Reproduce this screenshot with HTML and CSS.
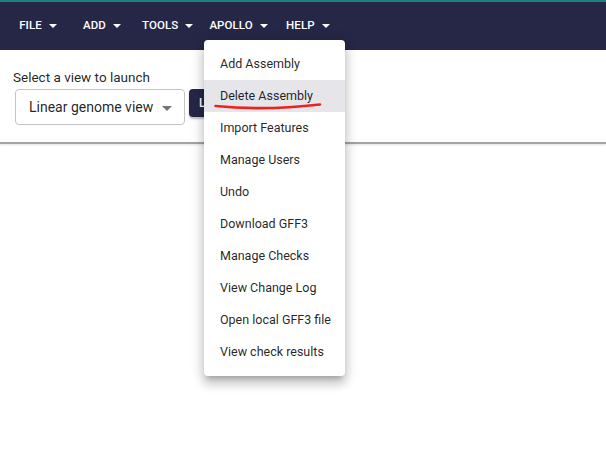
FILE: index.html
```html
<!DOCTYPE html>
<html>
<head>
<meta charset="utf-8">
<link rel="stylesheet" href="styles.css">
</head>
<body>
<header class="appbar">
  <nav class="menubar">
    <span class="menu-btn">FILE<span class="caret"></span></span>
    <span class="menu-btn">ADD<span class="caret"></span></span>
    <span class="menu-btn">TOOLS<span class="caret"></span></span>
    <span class="menu-btn">APOLLO<span class="caret"></span></span>
    <span class="menu-btn">HELP<span class="caret"></span></span>
  </nav>
</header>
<main class="launcher">
  <div class="label">Select a view to launch</div>
  <div class="controls">
    <div class="select">Linear genome view<span class="select-caret"></span></div>
    <button class="launch">Launch view</button>
  </div>
</main>
<div class="divider"></div>

<ul class="dropdown">
  <li>Add Assembly</li>
  <li class="active">Delete Assembly</li>
  <li>Import Features</li>
  <li>Manage Users</li>
  <li>Undo</li>
  <li>Download GFF3</li>
  <li>Manage Checks</li>
  <li>View Change Log</li>
  <li>Open local GFF3 file</li>
  <li>View check results</li>
</ul>
<svg class="scribble" width="110" height="12" viewBox="0 0 110 12">
  <path d="M1.5 5 Q 50 10 106 3.5" stroke="#f0201c" stroke-width="2.6" fill="none" stroke-linecap="round"/>
</svg>
</body>
</html>
```
FILE: styles.css
```css
html, body {
  margin: 0;
  padding: 0;
  background: #ffffff;
  font-family: Roboto, "Liberation Sans", sans-serif;
  color: rgba(0,0,0,0.87);
  width: 606px;
  height: 452px;
  overflow: hidden;
}
.appbar {
  background: #262747;
  border-top: 2px solid #1d7f80;
  box-sizing: border-box;
  height: 50px;
}
.menubar {
  display: flex;
  padding-left: 6px;
  padding-top: 16px;
}
.menu-btn {
  display: inline-flex;
  align-items: center;
  justify-content: center;
  min-width: 64px;
  box-sizing: border-box;
  padding: 0 8px;
  color: #ffffff;
  font-size: 11.5px;
  font-weight: 500;
  letter-spacing: 0.1px;
}
.caret {
  display: inline-block;
  width: 0;
  height: 0;
  border-left: 4.5px solid transparent;
  border-right: 4.5px solid transparent;
  border-top: 4.5px solid #ffffff;
  margin-left: 7px;
  margin-top: 2px;
}
.launcher {
  padding: 19px 0 0 13px;
}
.label {
  font-size: 13.5px;
  color: rgba(0,0,0,0.87);
  height: 20px;
}
.controls {
  display: flex;
  align-items: flex-start;
  padding-left: 2px;
}
.select {
  box-sizing: border-box;
  width: 170px;
  height: 36px;
  border: 1px solid #c4c4c4;
  border-radius: 4px;
  font-size: 14px;
  display: flex;
  align-items: center;
  padding-left: 13px;
  position: relative;
}
.select-caret {
  position: absolute;
  right: 12px;
  top: 16px;
  width: 0;
  height: 0;
  border-left: 5px solid transparent;
  border-right: 5px solid transparent;
  border-top: 5px solid #757575;
}
.launch {
  margin-left: 4px;
  height: 28px;
  background: #262747;
  color: #ffffff;
  border: none;
  border-radius: 4px;
  font-family: Roboto, sans-serif;
  font-size: 12px;
  font-weight: 500;
  text-transform: uppercase;
  padding: 0 10px;
  box-shadow: 0 2px 2px rgba(0,0,0,0.25);
}
.divider {
  margin-top: 17px;
  height: 2px;
  background: #a3a3a3;
  box-shadow: 0 1px 2px rgba(0,0,0,0.12);
}
.dropdown {
  position: absolute;
  left: 204px;
  top: 40px;
  width: 141px;
  margin: 0;
  padding: 8px 0;
  list-style: none;
  background: #ffffff;
  border-radius: 4px;
  box-shadow: 0 5px 5px -3px rgba(0,0,0,0.2), 0 8px 10px 1px rgba(0,0,0,0.14), 0 3px 14px 2px rgba(0,0,0,0.12);
}
.dropdown li {
  height: 32px;
  line-height: 32px;
  padding-left: 16px;
  font-size: 12.5px;
  color: rgba(0,0,0,0.87);
  white-space: nowrap;
}
.dropdown li.active {
  background: #e5e5ea;
}
.scribble {
  position: absolute;
  left: 214px;
  top: 101px;
}
```
